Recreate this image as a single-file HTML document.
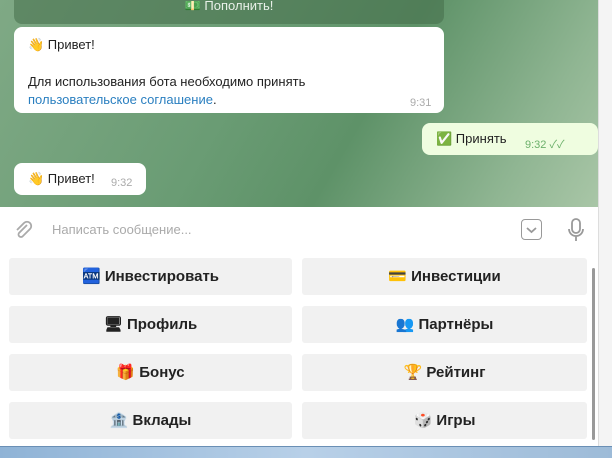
<!DOCTYPE html><html><head><meta charset="utf-8"><style>
body{margin:0;width:612px;height:457px;overflow:hidden;background:#fff;font-family:"Liberation Sans","Noto Sans CJK SC",sans-serif;position:relative}
.chat{position:absolute;left:0;top:0;width:598px;height:207px;background:linear-gradient(120deg,#7fa985 0%,#6a9c74 40%,#5e9268 60%,#8fb592 85%,#a9c6a7 100%)}
.b{position:absolute;background:#fff;border-radius:8px;font-size:13px;color:#222}
.t{position:absolute;font-size:11px;color:#aaa}
.btn{position:absolute;width:283px;height:37px;background:#f1f1f1;border-radius:3px;text-align:center;line-height:37px;font-size:15px;color:#222;font-weight:bold}
.a{position:absolute;left:9px}.c{position:absolute;left:302px;width:285px}
</style></head><body>
<div class="chat">
<div style="position:absolute;left:14px;top:0;width:430px;height:24px;background:rgba(70,110,75,.55);border-radius:0 0 8px 8px;color:#e8f0e8;font-size:13px;text-align:center;line-height:12px">💵 Пополнить!</div>
<div class="b" style="left:14px;top:27px;width:430px;height:86px"><div style="position:absolute;left:14px;top:10px">👋 Привет!</div><div style="position:absolute;left:14px;top:46px;line-height:18px">Для использования бота необходимо принять<br><span style="color:#2a7fc0">пользовательское соглашение</span>.</div><div class="t" style="left:396px;top:70px">9:31</div></div>
<div class="b" style="left:422px;top:123px;width:176px;height:32px;background:#effde0"><div style="position:absolute;left:14px;top:8px">✅ Принять</div><div class="t" style="left:103px;top:13px;color:#6bb06a">9:32 ✓✓</div></div>
<div class="b" style="left:14px;top:163px;width:132px;height:32px"><div style="position:absolute;left:14px;top:8px">👋 Привет!</div><div class="t" style="left:97px;top:14px">9:32</div></div>
</div>
<div style="position:absolute;left:598px;top:0;width:14px;height:446px;background:#f4f4f4;border-left:1px solid #ddd"></div>
<svg style="position:absolute;left:12px;top:219px" width="22" height="22" viewBox="0 0 22 22"><path d="M15 6 L7 14 a2.5 2.5 0 0 0 3.5 3.5 L18 10 a4 4 0 0 0 -6 -6 L5 11" fill="none" stroke="#aaa" stroke-width="1.8"/></svg>
<div style="position:absolute;left:52px;top:222px;font-size:13px;color:#aaa">Написать сообщение...</div>
<div style="position:absolute;left:521px;top:219px;width:19px;height:19px;border:1.8px solid #999;border-radius:4px"><svg width="19" height="19"><path d="M5 8 L9.5 12 L14 8" fill="none" stroke="#999" stroke-width="1.8"/></svg></div>
<svg style="position:absolute;left:566px;top:217px" width="20" height="26"><rect x="6" y="2" width="8" height="14" rx="4" fill="none" stroke="#999" stroke-width="1.8"/><path d="M3 12 a7 7 0 0 0 14 0 M10 19 V24" fill="none" stroke="#999" stroke-width="1.8"/></svg>
<div class="btn a" style="top:258px">🏧 Инвестировать</div><div class="btn c" style="top:258px">💳 Инвестиции</div>
<div class="btn a" style="top:306px">🖥 Профиль</div><div class="btn c" style="top:306px">👥 Партнёры</div>
<div class="btn a" style="top:354px">🎁 Бонус</div><div class="btn c" style="top:354px">🏆 Рейтинг</div>
<div class="btn a" style="top:402px">🏦 Вклады</div><div class="btn c" style="top:402px">🎲 Игры</div>
<div style="position:absolute;left:592px;top:268px;width:3px;height:172px;background:#999;border-radius:2px"></div>
<div style="position:absolute;left:0;top:446px;width:612px;height:11px;background:linear-gradient(90deg,#8fb3d6,#b8d0e8 50%,#9dbbd8);border-top:1px solid #6a8fb5"></div>
</body></html>
